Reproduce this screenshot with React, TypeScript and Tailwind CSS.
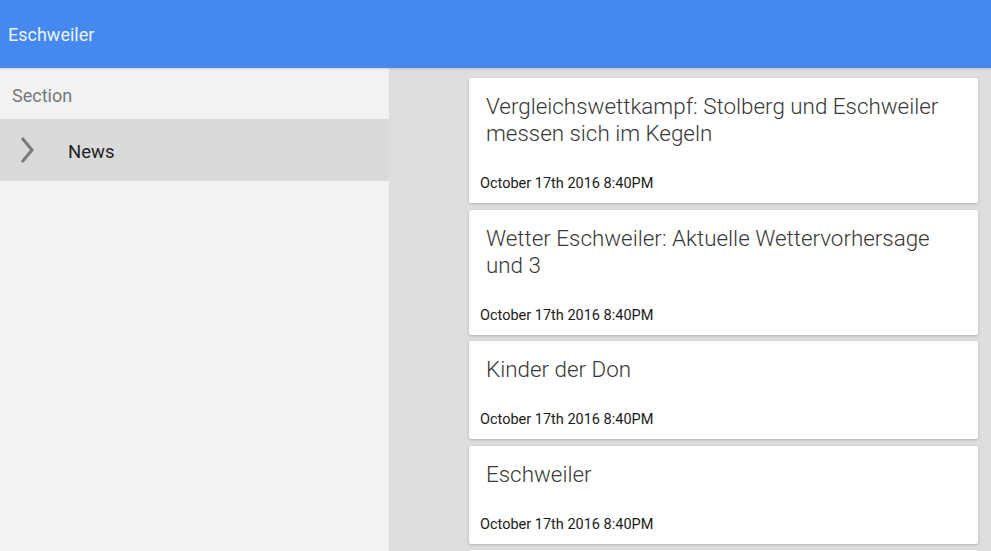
const articles = [
  'Vergleichswettkampf: Stolberg und Eschweiler messen sich im Kegeln',
  'Wetter Eschweiler: Aktuelle Wettervorhersage und 3',
  'Kinder der Don',
  'Eschweiler',
];

export default function App() {
  return (
    <div className="h-[551px] w-[991px] overflow-hidden flex flex-col bg-[#dedede] font-['Roboto',sans-serif]">
      <header className="h-[68px] shrink-0 bg-[#4588ef] flex items-center px-2 shadow-[0_1px_2px_rgba(0,0,0,0.15)] z-10">
        <span className="text-[18px] text-[#eef4ff]">Eschweiler</span>
      </header>

      <div className="flex flex-1 min-h-0">
        <aside className="w-[389px] shrink-0 bg-[#f2f2f2]">
          <div className="h-[51px] flex items-center px-3 pt-[3px] text-[18px] text-[#777]">Section</div>
          <div className="h-[62px] flex items-center bg-[#dadada]">
            <svg width="14" height="26" viewBox="0 0 14 26" className="ml-[20px]">
              <polyline points="2,1 12,13 2,25" fill="none" stroke="#7a7a7a" strokeWidth="3" />
            </svg>
            <span className="ml-[34px] pt-[5px] text-[18.5px] text-[#222]">News</span>
          </div>
        </aside>

        <main className="flex-1 pt-[10px] pl-[80px] pr-[13px] flex flex-col gap-[6.5px]">
          {articles.map((title, i) => (
            <div
              key={i}
              className="bg-white rounded-[2px] shadow-[0_1px_3px_rgba(0,0,0,0.2)] pt-[15px] pb-[11px] shrink-0"
            >
              <h2 className="pl-[17px] pr-[17px] text-[22.4px] leading-[27px] font-light text-[#383838]">{title}</h2>
              <p className="mt-[29px] pl-[11px] text-[14.5px] leading-[16px] text-[#1a1a1a]">October 17th 2016 8:40PM</p>
            </div>
          ))}
          <div className="h-[20px] shrink-0 bg-white rounded-[2px] shadow-[0_1px_3px_rgba(0,0,0,0.2)]" />
        </main>
      </div>
    </div>
  );
}
